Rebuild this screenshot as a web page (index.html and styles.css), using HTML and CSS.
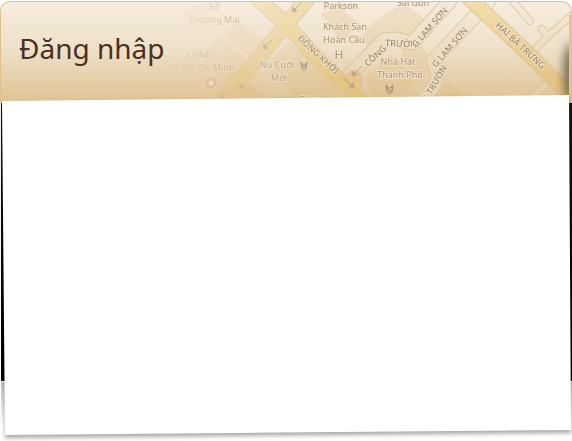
FILE: index.html
```html
<!DOCTYPE html>
<html lang="vi">
<head>
<meta charset="utf-8">
<meta name="viewport" content="width=device-width, initial-scale=1">
<title>Đăng nhập</title>
<link rel="stylesheet" href="styles.css">
</head>
<body>
<main class="dialog">
  <header class="banner">
    <svg class="map" viewBox="0 0 572 103" preserveAspectRatio="xMaxYMin slice" aria-hidden="true">
      <defs>
        <linearGradient id="fade" x1="180" x2="330" y1="0" y2="0" gradientUnits="userSpaceOnUse">
          <stop offset="0" stop-color="#fff" stop-opacity=".15"/>
          <stop offset="1" stop-color="#fff"/>
        </linearGradient>
        <mask id="reveal" maskUnits="userSpaceOnUse" x="0" y="0" width="572" height="103"><rect width="572" height="103" fill="url(#fade)"/></mask>
        <linearGradient id="gold" x1="0" x2="0" y1="0" y2="100" gradientUnits="userSpaceOnUse">
          <stop offset="0" stop-color="#f2deac"/>
          <stop offset="1" stop-color="#e2bf7c"/>
        </linearGradient>
        <linearGradient id="lane" x1="0" x2="0" y1="0" y2="100" gradientUnits="userSpaceOnUse">
          <stop offset="0" stop-color="#f5ebdc"/>
          <stop offset="1" stop-color="#e4cda5"/>
        </linearGradient>
        <filter id="soft" x="-100%" y="-30%" width="300%" height="160%"><feGaussianBlur stdDeviation="4 6"/></filter>
        <g id="arrow"><path d="M5-5-2 2"/><path d="M-5 5l1-5 4 4z"/></g>
      </defs>
      <g mask="url(#reveal)">
        <g class="blocks">
          <path d="M183 12l20-10 8 8-18 18zM202 55l20-20 24 22-19 22zM226 35l14-15 26 22-13 16zM272 60l17-20 26 23-20 25zM290 82l24-20 28 29-15 12h-28zM374 22l30-20 22 16-19 23-20-4-14 14-12-14zM322 13l17-9 22 19-18 18zM366 78l26-25 28 25-20 21h-23zM441 92l10-10 14 16h-24zM404 42l18 2 14 20-14 16-20-22z"/>
        </g>
        <g class="edge">
          <path d="M349 76 385 39 396 38 413 42 451 0M420 104 437 82 439 73 434 60 490 0" stroke-width="15"/>
          <path d="M512-2 531 20M543 28l6 7 23-20M549 35 530 55M536 94l15-15" stroke-width="8"/>
        </g>
        <g class="lane">
          <path d="M349 76 385 39 396 38 413 42 451 0M420 104 437 82 439 73 434 60 490 0" stroke-width="13"/>
          <path d="M512-2 531 20M543 28l6 7 23-20M549 35 530 55M536 94l15-15" stroke-width="6"/>
        </g>
        <g class="edge">
          <path d="M310-4 287 24 221 102M259-2 287 23 312 51 370 106M236 79l25 25M355 77v24M471-2 519 43 572 95" stroke-width="16"/>
        </g>
        <g class="gold">
          <path d="M310-4 287 24 221 102M259-2 287 23 312 51 370 106M471-2 519 43 572 95" stroke-width="14"/>
          <path d="M236 79l25 25M355 80v24" stroke-width="12"/>
        </g>
        <g class="arrows">
          <use href="#arrow" x="298" y="6"/><use href="#arrow" x="269" y="43"/><use href="#arrow" x="226" y="94"/>
          <use href="#arrow" x="358" y="70"/>
          <use href="#arrow" transform="translate(246 87) rotate(80)"/>
          <use href="#arrow" transform="translate(350 82) rotate(-95)"/>
        </g>
        <g class="labels">
          <text x="215" y="9">Sở</text>
          <text x="215" y="22">Thương Mại</text>
          <text x="201" y="57">UBND</text>
          <text x="203" y="70">TP Hồ Chí Minh</text>
          <text x="278" y="67">Nụ Cười</text>
          <text x="280" y="80">Mới</text>
          <text x="342" y="8">Parkson</text>
          <text x="346" y="29">Khách Sạn</text>
          <text x="345" y="42">Hoàn Cầu</text>
          <text x="414" y="5">Sai Gon</text>
          <text x="399" y="64">Nhà Hát</text>
          <text x="401" y="77">Thành Phố</text>
          <text x="311" y="102">Eden</text>
          <text class="hotel" x="340" y="58">H</text>
        </g>
        <g class="streets">
          <text transform="translate(298 38) rotate(43)">ĐỒNG KHỞI</text>
          <text transform="translate(369 66) rotate(-43)">CÔNG</text>
          <text transform="translate(386 45) rotate(3)">TRƯỜN</text>
          <text transform="translate(417 47) rotate(-49)">G LAM SƠN</text>
          <text transform="translate(428 102) rotate(-60)">G TRƯỜN</text>
          <text transform="translate(437 67) rotate(-49)">G LAM SƠN</text>
          <text transform="translate(496 25) rotate(43)">HAI BÀ TRƯNG</text>
          <text transform="translate(254 101) rotate(44)">ƯƠNG</text>
        </g>
        <g class="masks">
          <path d="M302 61l1 7 2 1 2-1 1-7-2 3h-2zM303 64l2 3 2-3"/>
          <path d="M387 84l1 7 3 2 2-2 1-7-2 3h-3zM388 87l3 4 3-4"/>
        </g>
        <circle cx="212" cy="82" r="4" fill="#f3d28d" stroke="#d99773" stroke-width="2"/>
        <path d="M212 79l1 2h2l-2 2 1 2-2-1-2 1 1-2-2-2h2z" fill="#fff"/>
      </g>
      <ellipse class="shade" cx="571" cy="72" rx="7" ry="30"/>
      <path class="rim" d="M571 14v89"/>
    </svg>
    <h1 class="title">Đăng nhập</h1>
  </header>
  <section class="sheet" aria-label="Đăng nhập">
    <div class="sides"></div>
    <div class="fade"></div>
    <div class="drop"><div class="paper"></div></div>
  </section>
</main>
</body>
</html>
```

FILE: styles.css
```css
* {
  box-sizing: border-box;
}

body {
  margin: 0;
  background: #fff;
  font-family: "Noto Sans", "Open Sans", sans-serif;
}

.dialog {
  display: flex;
  flex-direction: column;
  min-height: 100vh;
  padding-top: 1px;
  overflow: hidden;
}

.banner {
  position: relative;
  height: 102px;
  padding: 26px 18px;
  overflow: hidden;
  border: 1px solid #dfc08c;
  border-bottom: 0;
  border-radius: 10px 10px 0 0;
  background: linear-gradient(#f6ecdf, #efe1ca 45%, #e0c496 96%);
}

.map {
  position: absolute;
  inset: -1px 0 0;
  width: 100%;
  height: 103px;
}

.title {
  position: relative;
  margin: 0;
  color: #49301f;
  font-size: 28px;
  font-weight: 400;
  line-height: 40px;
}

.blocks {
  fill: #d9b878;
  opacity: .22;
}

.edge,
.lane,
.gold {
  fill: none;
  stroke-linejoin: round;
  stroke-linecap: round;
}

.edge {
  stroke: #d8c198;
  opacity: .8;
}

.lane {
  stroke: url(#lane);
}

.gold {
  stroke: url(#gold);
}

.arrows {
  fill: #bda98a;
  stroke: #bda98a;
  stroke-width: 1px;
}

.labels,
.streets {
  fill: #ab9679;
  stroke: #f3e6d0;
  stroke-width: 2px;
  stroke-opacity: .7;
  paint-order: stroke;
  font-family: "Noto Sans", "Open Sans", sans-serif;
  font-size: 9px;
}

.labels {
  text-anchor: middle;
}

.hotel {
  font-size: 12px;
}

.streets {
  fill: #a08e74;
  font-weight: 500;
}

.masks {
  fill: none;
  stroke: #a08d72;
  stroke-width: 1px;
}

.shade {
  fill: #59503e;
  opacity: .75;
  filter: url(#soft);
}

.rim {
  stroke: #e3c594;
  stroke-width: 2px;
}

.sheet {
  flex: 1;
  display: grid;
  grid-template-rows: 1fr 60px;
  min-height: 300px;
}

.sides {
  grid-area: 1 / 1;
  margin: 0 0 0 1px;
  background: linear-gradient(#17170f, #000);
}

.fade {
  grid-area: 2 / 1;
  margin: 1px 0 16px 1px;
  background: linear-gradient(#c5c7c7, #fff);
}

.drop {
  position: relative;
  grid-area: 1 / 1 / 3 / 2;
  margin-top: -9px;
  filter: drop-shadow(0 3px 2px #00000059);
}

.paper {
  height: 100%;
  background: #fff;
  clip-path: polygon(2px 7px, calc(100% - 3px) 1px, calc(100% - 1px) calc(100% - 11px), 5px calc(100% - 6px));
}
```
